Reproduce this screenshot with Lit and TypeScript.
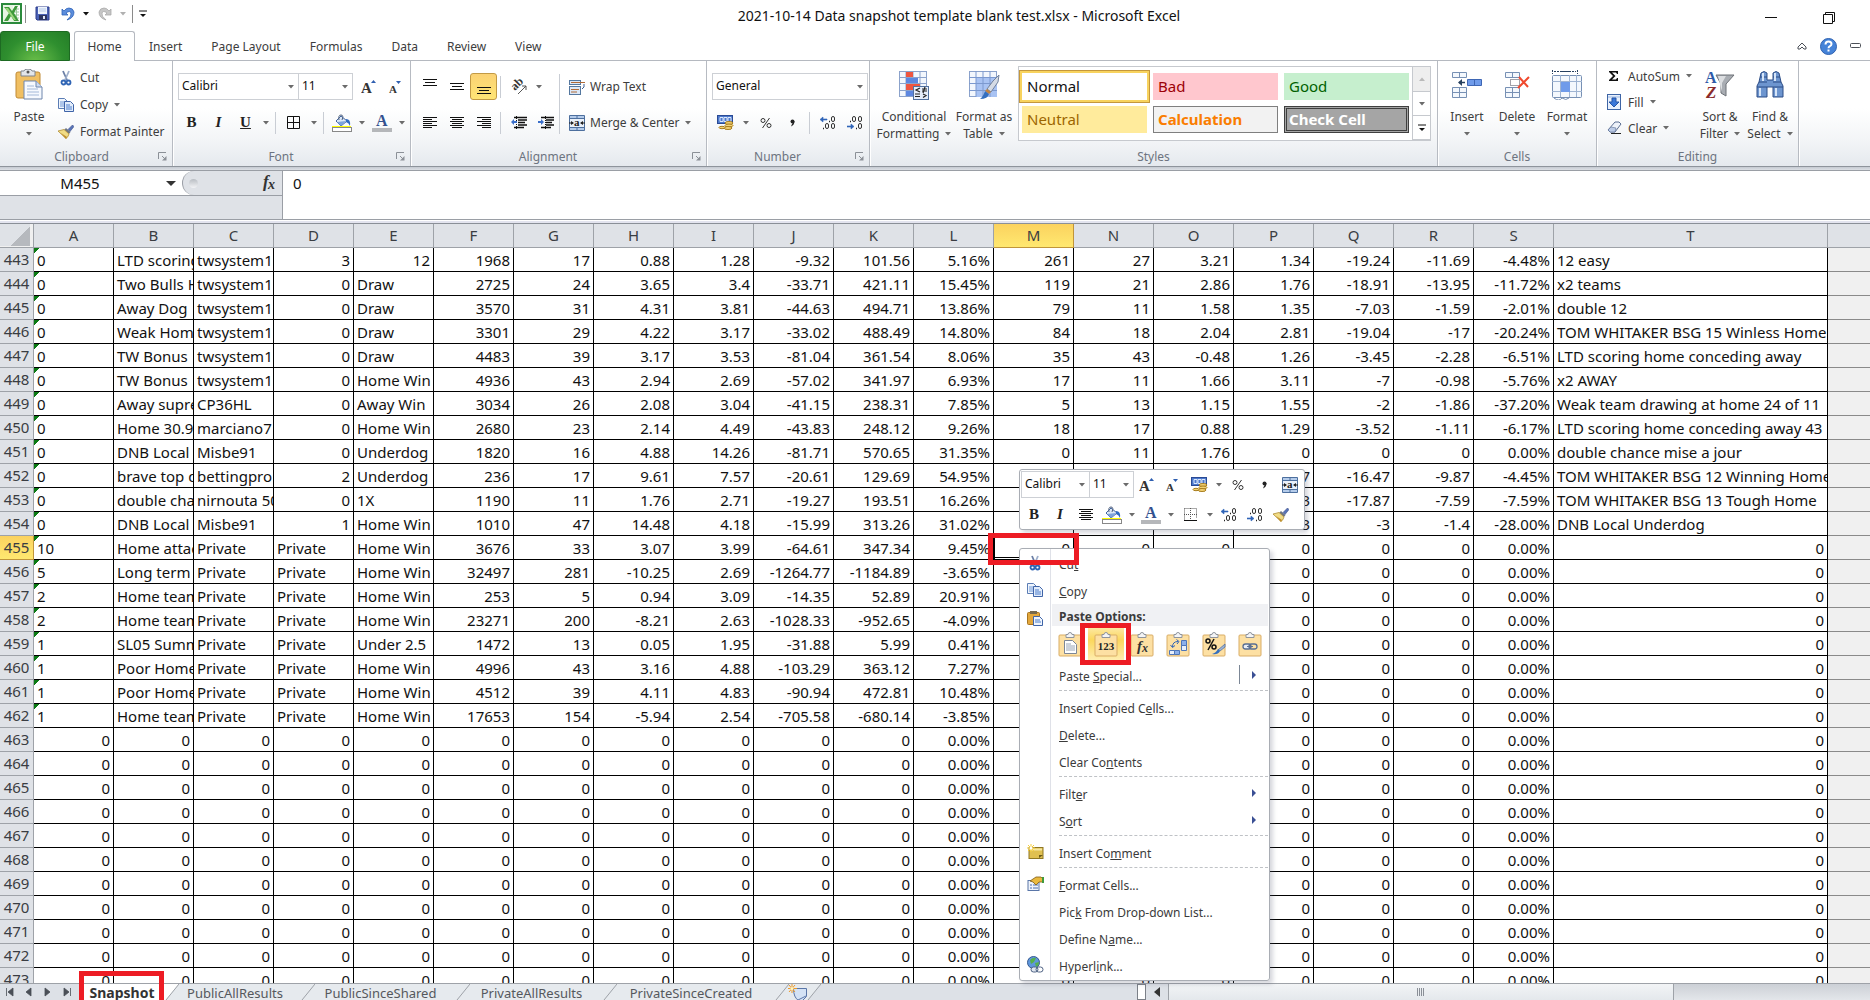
import { LitElement, html, css, nothing, TemplateResult } from "lit";
import { customElement } from "lit/decorators.js";
import { classMap } from "lit/directives/class-map.js";

/* ---------- icons ---------- */

const icons: Record<string, TemplateResult> = {
  excel: html`<svg width="21" height="21" viewBox="0 0 21 21"><rect x="1" y="1" width="19" height="19" fill="#e9f5e4" stroke="#2b8a3c" stroke-width="2"/><rect x="12" y="3" width="7" height="15" fill="#fff"/><path d="M13 6h5M13 9h5M13 12h5M13 15h5M15.500 4v13" stroke="#9bc99b"/><path d="M3 4h5l3 4 3-5h3l-4 7 5 8h-5l-3-5-3 5H3l5-8z" fill="#3f9a3b"/><path d="M4 5h3l8 12h-2z" fill="#9bd67c"/></svg>`,
  save: html`<svg width="15" height="15" viewBox="0 0 15 15"><path d="M1 1h13v13H2L1 13z" fill="#4a62b5" stroke="#2c3c8c"/><rect x="3" y="1" width="9" height="7" fill="#eef4fc"/><rect x="4" y="9" width="8" height="5" fill="#2a3360"/><rect x="8" y="10" width="2" height="3" fill="#dfe6f5"/><path d="M4 3h7M4 5h7" stroke="#b5c8e8"/></svg>`,
  undo: html`<svg width="14" height="14" viewBox="0 0 14 14"><path d="M1 2v6h6L5 6q4-3 5 0 1 3-4 7 7-2 7-8-1-4-5-4-3 0-5 3z" fill="#5b8ddc" stroke="#2e62b8" stroke-width=".8"/></svg>`,
  redo: html`<svg width="14" height="14" viewBox="0 0 14 14"><path d="M13 2v6H7l2-2Q5 3 4 6q-1 3 4 7-7-2-7-8 1-4 5-4 3 0 5 3z" fill="#c6c6c6" stroke="#aaa" stroke-width=".8"/></svg>`,
  qat: html`<svg width="8" height="8" viewBox="0 0 8 8"><path d="M0 1h8" stroke="#111" stroke-width="1"/><path d="M1 4h6L4 7z" fill="#111"/></svg>`,
  arrow: html`<svg width="6" height="4" viewBox="0 0 6 4"><path d="M0 0h6L3 3.500z" fill="#6b6b6b"/></svg>`,
  darrow: html`<svg width="6" height="4" viewBox="0 0 6 4"><path d="M0 0h6L3 3.500z" fill="#111"/></svg>`,
  garrow: html`<svg width="6" height="4" viewBox="0 0 6 4"><path d="M0 0h6L3 3.500z" fill="#b0b0b0"/></svg>`,
  paste: html`<svg width="28" height="31" viewBox="0 0 28 31"><rect x="1" y="3" width="24" height="26" rx="2" fill="#f0bf62" stroke="#c08a34"/><path d="M6 2h3q0-2 4-2t4 2h3v5H6z" fill="#e3e6ea" stroke="#7e858e"/><circle cx="13" cy="3" r="1.500" fill="#555"/><path d="M9 12h12l6 6v12H9z" fill="#f6f9fe" stroke="#6e86ad"/><path d="M21 12v6h6" fill="#cfdcf0" stroke="#6e86ad"/><path d="M12 17h7M12 20h11M12 23h12M12 26h12" stroke="#a3b8d8"/></svg>`,
  cut: html`<svg width="16" height="16" viewBox="0 0 16 16"><path d="M5 1l4 9" stroke="#6b7fa6" stroke-width="1.800" fill="none"/><path d="M11 1L7 10" stroke="#9fb0cc" stroke-width="1.800" fill="none"/><circle cx="5.500" cy="12.500" r="2" fill="none" stroke="#2f64b4" stroke-width="1.800"/><circle cx="10.500" cy="12.500" r="2" fill="none" stroke="#2f64b4" stroke-width="1.800"/></svg>`,
  copy: html`<svg width="16" height="16" viewBox="0 0 16 16"><path d="M.5 1.500h6l3 3v7h-9z" fill="#eff5fd" stroke="#5b7db5"/><path d="M2 5h5M2 7h6M2 9h6" stroke="#6f97d6"/><path d="M6.500 4.500h6l3 3v7h-9z" fill="#e3edfb" stroke="#3f64a8"/><path d="M8 8h4M8 10h6M8 12h6" stroke="#4b7ccc"/></svg>`,
  painter: html`<svg width="16" height="16" viewBox="0 0 16 16"><path d="M14.500 1L16 2.500l-4 5-2-2z" fill="#5874b8" stroke="#3c4f86" stroke-width=".6"/><path d="M8 4l4.500 4-1.500 2-5-4z" fill="#6f7684"/><path d="M6 5.500L0 7l8 7.500q2-1 3-4.500z" fill="#f1dc86" stroke="#b08d33" stroke-width=".8"/><path d="M3 9l6 4-1 2z" fill="#bf8e2b"/></svg>`,
  launcher: html`<svg width="9" height="9" viewBox="0 0 9 9"><path d="M.5 7V.5H8" fill="none" stroke="#8b9097"/><path d="M8.500 4v4.500H4z" fill="#8b9097"/><path d="M4 4l3 3" stroke="#8b9097"/></svg>`,
  grow: html`<svg width="16" height="16" viewBox="0 0 16 16"><text x="0" y="14" font-family="Liberation Serif, serif" font-weight="700" font-size="15" fill="#333">A</text><path d="M10 4h5l-2.500-3z" fill="#2f5fb0"/></svg>`,
  shrink: html`<svg width="16" height="16" viewBox="0 0 16 16"><text x="1" y="14" font-family="Liberation Serif, serif" font-weight="700" font-size="11" fill="#333">A</text><path d="M8 2h5l-2.500 3z" fill="#2f5fb0"/></svg>`,
  borders: html`<svg width="13" height="13" viewBox="0 0 13 13"><path d="M.5.5h12v12H.5zM6.500 0v13M0 6.500h13" fill="none" stroke="#111"/></svg>`,
  dotborders: html`<svg width="13" height="13" viewBox="0 0 13 13"><path d="M.5.5h12v10M.5.5v11M6.500 0v12M0 6.500h13" fill="none" stroke="#555" stroke-dasharray="1 1"/><path d="M0 12.500h13" stroke="#111"/></svg>`,
  fill: html`<svg width="20" height="18" viewBox="0 0 20 18"><path d="M9 2l6 5-6 5-5-5z" fill="#dbe7f7" stroke="#41649e"/><path d="M7 6q-1-5 2-5t1 5" fill="none" stroke="#51627f"/><path d="M14 5q5 0 4 7-1-3-4-4z" fill="#2f6ac2"/><path d="M5 8l9-1-5 5z" fill="#7da4de"/><rect x="0" y="12" width="19" height="1" fill="#ff0"/><rect x=".5" y="13.500" width="19" height="4" fill="#fff" stroke="#888"/></svg>`,
  fontcolor: html`<svg width="20" height="18" viewBox="0 0 20 18"><text x="4" y="12" font-family="Liberation Serif, serif" font-weight="700" font-size="16" fill="#33518f">A</text><rect x="0" y="14" width="20" height="4" fill="#b5b7ba"/></svg>`,
  top: html`<svg width="14" height="16" viewBox="0 0 14 16"><path d="M0 .5h14M2 3.500h10M0 6.500h14" stroke="#111"/></svg>`,
  middle: html`<svg width="14" height="8" viewBox="0 0 14 8"><path d="M0 .5h14M2 3.500h10M0 6.500h14" stroke="#111"/></svg>`,
  bottom: html`<svg width="14" height="14" viewBox="0 0 14 14"><path d="M0 7.500h14M2 10.500h10M0 13.500h14" stroke="#111"/></svg>`,
  left: html`<svg width="14" height="11" viewBox="0 0 14 11"><path d="M0 .5h14M0 2.500h9M0 4.500h14M0 6.500h9M0 8.500h14M0 10.500h9" stroke="#111"/></svg>`,
  center: html`<svg width="14" height="11" viewBox="0 0 14 11"><path d="M0 .5h14M2 2.500h10M0 4.500h14M2 6.500h10M0 8.500h14M2 10.500h10" stroke="#111"/></svg>`,
  right: html`<svg width="14" height="11" viewBox="0 0 14 11"><path d="M0 .5h14M5 2.500h9M0 4.500h14M5 6.500h9M0 8.500h14M5 10.500h9" stroke="#111"/></svg>`,
  orient: html`<svg width="18" height="16" viewBox="0 0 18 16"><text x="0" y="0" transform="translate(5 12) rotate(-45)" font-family="Liberation Serif, serif" font-weight="700" font-size="12" fill="#333">ab</text><path d="M8 15l8-8M12 7h4v4" fill="none" stroke="#555"/></svg>`,
  outdent: html`<svg width="16" height="13" viewBox="0 0 16 13"><path d="M3 1.500h13M7 4h9M7 6.500h7M7 9h9M3 11.500h10" stroke="#111" stroke-width="1.500"/><path d="M5.500 0v13" stroke="#111" stroke-dasharray="1 1"/><path d="M0 6l3-3v2h3v2H3v2z" fill="#3b6fca"/></svg>`,
  indent: html`<svg width="16" height="13" viewBox="0 0 16 13"><path d="M3 1.500h13M8 4h8M8 6.500h6M8 9h8M3 11.500h10" stroke="#111" stroke-width="1.500"/><path d="M7.500 0v13" stroke="#111" stroke-dasharray="1 1"/><path d="M6 6L3 3v2H0v2h3v2z" fill="#3b6fca"/></svg>`,
  wrap: html`<svg width="16" height="16" viewBox="0 0 16 16"><rect x=".5" y="1.500" width="11" height="4" fill="#dce8f7" stroke="#54779f"/><path d="M2 3.500h14" stroke="#b06a37"/><rect x=".5" y="7.500" width="11" height="8" fill="#dce8f7" stroke="#54779f"/><path d="M2 10.500h8M2 13h6" stroke="#b06a37"/><path d="M15 5v3l-2 2" fill="none" stroke="#3b5f94"/></svg>`,
  merge: html`<svg width="16" height="16" viewBox="0 0 16 16"><path d="M.5.5h15v15H.5zM0 3.500h16M0 12.500h16M8 0v3M8 13v3" fill="#b4cbea" stroke="#4d6f9e"/><rect x="1" y="4" width="14" height="8" fill="#e9f0fa"/><text x="5" y="11" font-family="Liberation Serif, serif" font-weight="700" font-size="11" fill="#222">a</text><path d="M0 8h4M12 8h4" stroke="#222"/><path d="M5 8L2 6v4zM11 8l3-2v4z" fill="#222"/></svg>`,
  currency: html`<svg width="17" height="17" viewBox="0 0 17 17"><rect x=".5" y="1.500" width="15" height="8" fill="#4c78cc" stroke="#2a4a94"/><path d="M3 3.500h3v4H3zM7 3.500h3v4H7zM11 3.500h3v4h-3z" fill="none" stroke="#dce8fb"/><ellipse cx="12" cy="9" rx="4" ry="1.500" fill="#f3d275" stroke="#a87d1d"/><ellipse cx="12" cy="11.500" rx="4" ry="1.500" fill="#f3d275" stroke="#a87d1d"/><ellipse cx="11" cy="14" rx="4" ry="1.500" fill="#f3d275" stroke="#a87d1d"/><ellipse cx="5" cy="13.500" rx="3" ry="1.200" fill="#f3d275" stroke="#a87d1d"/></svg>`,
  percent: html`<svg width="12" height="12" viewBox="0 0 12 12"><circle cx="3" cy="3.500" r="2" fill="none" stroke="#333"/><circle cx="9" cy="8.500" r="2" fill="none" stroke="#333"/><path d="M9.500 1l-7 10" stroke="#333"/></svg>`,
  comma: html`<svg width="5" height="8" viewBox="0 0 5 8"><circle cx="2.500" cy="2.500" r="2" fill="#222"/><path d="M4.500 2q0 4-3.500 5.500L2 5z" fill="#222"/></svg>`,
  incdec: html`<svg width="16" height="14" viewBox="0 0 16 14"><path d="M0 3.500L3 1v2h4v1H3v2z" fill="#2f64b8" stroke="#2f64b8" stroke-width=".6"/><path d="M9 5.500h1M3 12.500h1" stroke="#222" stroke-width="1.500"/><rect x="11.500" y=".5" width="3" height="5" rx="1.500" fill="none" stroke="#333"/><rect x="5.500" y="7.500" width="3" height="5" rx="1.500" fill="none" stroke="#333"/><rect x="11.500" y="7.500" width="3" height="5" rx="1.500" fill="none" stroke="#333"/></svg>`,
  decdec: html`<svg width="16" height="14" viewBox="0 0 16 14"><path d="M7 10.500L4 8v2H0v1h4v2z" fill="#2f64b8" stroke="#2f64b8" stroke-width=".6"/><path d="M3 5.500h1M9 12.500h1" stroke="#222" stroke-width="1.500"/><rect x="5.500" y=".5" width="3" height="5" rx="1.500" fill="none" stroke="#333"/><rect x="11.500" y=".5" width="3" height="5" rx="1.500" fill="none" stroke="#333"/><rect x="11.500" y="7.500" width="3" height="5" rx="1.500" fill="none" stroke="#333"/></svg>`,
  conditional: html`<svg width="32" height="31" viewBox="0 0 32 31"><rect x="1.500" y="2.500" width="27" height="25" fill="#f3f7fd" stroke="#8ba2cb"/><path d="M8 2v26M15 2v26M22 2v26M1 8.500h28M1 14.500h28M1 21.500h28" stroke="#8ba2cb"/><path d="M8 3h7v5H8zM8 15h14v6H8z" fill="#ee5540"/><path d="M8 9h12v5H8zM8 22h7v5H8z" fill="#5c86e0"/><rect x="15.500" y="17.500" width="15" height="13" fill="#e6eefb" stroke="#51719f"/><path d="M22 19l-4 2 4 2M17 25h5M17 27.500h5M24 20h5M24 22h5M27 18l-2 6M25 25l3 1.500-3 2" fill="none" stroke="#222" stroke-width="1.200"/></svg>`,
  tablefmt: html`<svg width="32" height="31" viewBox="0 0 32 31"><rect x="1.500" y="2.500" width="27" height="25" fill="#f3f7fd" stroke="#8ba2cb"/><path d="M8 9h21v19H8z" fill="#a9c3f3"/><path d="M8 2v26M15 2v26M22 2v26M1 8.500h28M1 14.500h28M1 21.500h28" stroke="#7c99cf"/><path d="M31 6l-1 7-7 10-4-3 6-8z" fill="#d5dbe5" stroke="#71819c"/><path d="M19 20l4 3-2 2-4-3z" fill="#c28342"/><path d="M17 22l4 3q-1 5-9 5 3-2 5-8z" fill="#356fbe"/></svg>`,
  insert: html`<svg width="32" height="31" viewBox="0 0 32 31"><path d="M1.500 3.500h14v5h-14zM8.500 3v6M1.500 18.500h14v10h-14zM8.500 18v10M1 23.500h15" fill="#f4f8fd" stroke="#7790b4"/><path d="M16.500 10.500h14v6h-14zM23.500 10v7" fill="#6f9bea" stroke="#3e66b4"/><path d="M14 13.500H8" stroke="#27405f" stroke-width="1.500"/><path d="M11 10l-4 3.500 4 3.500z" fill="#27405f"/></svg>`,
  delete: html`<svg width="32" height="31" viewBox="0 0 32 31"><path d="M4.500 3.500h14v5h-14zM11.500 3v6M4.500 18.500h14v10h-14zM11.500 18v10M4 23.500h15" fill="#f4f8fd" stroke="#7790b4"/><path d="M9.500 10.500h9v6h-9z" fill="none" stroke="#445" stroke-dasharray="1 1"/><path d="M18 8l9 10M28 8L17 19" stroke="#f0492d" stroke-width="2"/></svg>`,
  format: html`<svg width="32" height="31" viewBox="0 0 32 31"><path d="M1.500 1v4M26.500 1v4M3 2.500h22" stroke="#27405f" stroke-dasharray="2 1"/><path d="M9 2.500h10" stroke="#27405f"/><rect x="1.500" y="6.500" width="29" height="22" rx="1" fill="#f4f8fd" stroke="#7790b4"/><path d="M9.500 6v22M18.500 6v22M25.500 6v22M1 12.500h30M1 22.500h30" stroke="#9fb4d2"/><rect x="10" y="13" width="9" height="10" fill="#6f9bea"/><path d="M3 29q5 4 8 0 4 3 7 0" fill="#fff" stroke="#7790b4"/></svg>`,
  sigma: html`<svg width="14" height="16" viewBox="0 0 14 16"><path d="M2 3h9v3h-1l-1-1.500H5l3.500 3.500L5 11.500h4l1-1.500h1v3H2v-1l4-4-4-4z" fill="#111"/></svg>`,
  filldown: html`<svg width="14" height="16" viewBox="0 0 14 16"><rect x=".5" y=".5" width="13" height="15" fill="#e8f0fc" stroke="#3e65a5"/><path d="M1 3h12" stroke="#9db8e2"/><path d="M5 4h4v4h3l-5 5-5-5h3z" fill="#3a77d8" stroke="#2454a5"/></svg>`,
  clear: html`<svg width="15" height="14" viewBox="0 0 15 14"><path d="M1 9l7-8h4l2 2-6 8H3z" fill="#eef2f9" stroke="#5b6f93"/><path d="M1 9l3-3 5 1-1 4H3z" fill="#bccbe6" stroke="#5b6f93" stroke-width=".6"/><path d="M4 12.500h10" stroke="#222"/></svg>`,
  sort: html`<svg width="32" height="31" viewBox="0 0 32 31"><text x="1" y="14" font-family="Liberation Serif, serif" font-weight="700" font-size="16" fill="#2d5aa8">A</text><text x="2" y="29" font-family="Liberation Serif, serif" font-weight="700" font-size="17" font-style="italic" fill="#8a2b2b">Z</text><path d="M12 6h18l-8 9v12l-5-3v-9z" fill="#a9adb3" stroke="#6d7177"/><path d="M14 7h8l-4 7v9z" fill="#dcdee1"/></svg>`,
  find: html`<svg width="30" height="31" viewBox="0 0 30 31"><path d="M6 4q3-3 6 0v7h6V4q3-3 6 0l2 9 2 4v11H18V18h-6v10H2V17l2-4z" fill="#6d95cf" stroke="#2c4c86"/><path d="M5 8h7M18 8h7M4 13h8M18 13h8M2 18h10M18 18h10" stroke="#2c4c86"/><path d="M5 19v8M21 19v8M8 4v8M20 4v8" stroke="#d6e5f8" stroke-width="2"/></svg>`,
  help: html`<svg width="17" height="17" viewBox="0 0 17 17"><circle cx="8.500" cy="8.500" r="8" fill="#4583d8" stroke="#2f62b0"/><path d="M5.500 6.500q0-3 3-3t3 2.500q0 1.500-1.500 2.200-1.500.8-1.500 2" fill="none" stroke="#fff" stroke-width="2"/><rect x="7.500" y="11.500" width="2" height="2" fill="#fff"/></svg>`,
  fx: html`<svg width="16" height="18" viewBox="0 0 16 18"><text x="2" y="13" font-family="Liberation Serif, serif" font-style="italic" font-weight="700" font-size="17" fill="#333">f</text><text x="7" y="15" font-family="Liberation Serif, serif" font-style="italic" font-weight="700" font-size="14" fill="#333">x</text></svg>`,
  pasteSmall: html`<svg width="16" height="16" viewBox="0 0 16 16"><rect x=".5" y="2.500" width="12" height="12" rx="1" fill="#e3a73b" stroke="#a87520"/><path d="M3 1h7v3H3z" fill="#77694c"/><path d="M6.500 6.500h6l3 3v6h-9z" fill="#eff5fd" stroke="#3f64a8"/><path d="M8 10h5M8 12h6" stroke="#4b7ccc"/></svg>`,
  comment: html`<svg width="17" height="15" viewBox="0 0 17 15"><rect x="2" y="3.500" width="14" height="11" fill="#e0c050" stroke="#8f7722"/><path d="M3 5.500h12" stroke="#f6e7a1" stroke-width="2"/><path d="M12 14v-3h4" fill="#6b5a18"/><path d="M4 0v8M0 4h8M1 1l6 6M7 1L1 7" stroke="#f7cf3a"/><circle cx="4" cy="4" r="1.500" fill="#fff"/></svg>`,
  formatCells: html`<svg width="17" height="16" viewBox="0 0 17 16"><rect x="1" y="4.500" width="11" height="10" fill="#eef3fb" stroke="#5a76a8"/><path d="M3 9h2M3 12h2M6 9h5M6 12h5" stroke="#4a6fb0"/><path d="M3 5l6-4h5l2 2v3h-4l-3 3-3-3z" fill="#e9b93e" stroke="#7d5b14" stroke-width=".8"/><path d="M16 1v6" stroke="#3f9a3b" stroke-width="2"/></svg>`,
  link: html`<svg width="17" height="17" viewBox="0 0 17 17"><circle cx="6.500" cy="6.500" r="6" fill="#5f97dc" stroke="#35598f"/><path d="M3 4q3-3 6-2l-2 4-3 2zM8 7l4-1q0 4-3 5z" fill="#55b04c"/><rect x="4" y="11" width="7" height="5" rx="2.500" fill="#dfe6f0" stroke="#4f6384"/><rect x="9" y="11" width="7" height="5" rx="2.500" fill="none" stroke="#4f6384"/></svg>`,
  newsheet: html`<svg width="20" height="17" viewBox="0 0 20 17"><path d="M5.500 4.500h13v8l-4 4h-4q-5-3-5-12z" fill="#d4e2f5" stroke="#5a76a8"/><path d="M10 16l8-4" stroke="#5a76a8"/><path d="M4 0v9M0 4.500h9M1 1l6 7M7 1L1 8" stroke="#ef9b28"/><circle cx="4" cy="4.500" r="1.500" fill="#fff6c0"/></svg>`,
};

/* Clipboard tile that carries each paste-option picture */
const clipTile = (inner: TemplateResult) => html`<svg width="24" height="26" viewBox="0 0 24 26">
  <rect x="1" y="4" width="22" height="21" rx="1" fill="#fde0a3" stroke="#d9ad66"/>
  <path d="M8 6.500v-3h2q0-2 2-2t2 2h2v3z" fill="#f3f4f6" stroke="#8f949c"/>
</svg>${inner}`;

const pasteOptions: { name: string; art: TemplateResult; on?: boolean }[] = [
  { name: "Paste", art: html`<svg class="over" width="24" height="26" viewBox="0 0 24 26"><path d="M6.500 9.500h8l4 4v9h-12z" fill="#fff" stroke="#7c8696"/><path d="M8 13h5M8 15h9M8 17h9M8 19h9" stroke="#9aa5b6"/></svg>` },
  { name: "Values", on: true, art: html`<svg class="over" width="24" height="26" viewBox="0 0 24 26"><text x="12" y="19" text-anchor="middle" font-family="Liberation Serif, serif" font-weight="700" font-size="11" fill="#222">123</text></svg>` },
  { name: "Formulas", art: html`<svg class="over" width="24" height="26" viewBox="0 0 24 26"><text x="7" y="20" font-family="Liberation Serif, serif" font-style="italic" font-weight="700" font-size="15" fill="#333">f</text><text x="12" y="21" font-family="Liberation Serif, serif" font-style="italic" font-weight="700" font-size="12" fill="#333">x</text></svg>` },
  { name: "Transpose", art: html`<svg class="over" width="24" height="26" viewBox="0 0 24 26"><path d="M15.500 9.500h5v5h-5zM15.500 14.500h5v5h-5zM3.500 19.500h5v4h-5zM8.500 19.500h5v4h-5z" fill="#e9f0fb" stroke="#4f76b8"/><path d="M16 10h4v4h-4zM9 20h4v3H9z" fill="#8db0ea"/><path d="M6.500 16q0-5.500 5.500-5.500M4.500 14l2 2.500 2.500-2M10.500 8.500l2.500 2-2 2.500" fill="none" stroke="#2f64b8"/></svg>` },
  { name: "Formatting", art: html`<svg class="over" width="24" height="26" viewBox="0 0 24 26"><circle cx="6" cy="10" r="2" fill="none" stroke="#111" stroke-width="1.500"/><circle cx="12" cy="16" r="2" fill="none" stroke="#111" stroke-width="1.500"/><path d="M12 8L6 19" stroke="#111" stroke-width="1.500"/><path d="M23 13v3l-5 4-2-1z" fill="#9db4d8" stroke="#54719f" stroke-width=".8"/><path d="M16 18l2 2q-2 4-8 3 4-1 6-5z" fill="#356fbe"/></svg>` },
  { name: "Paste Link", art: html`<svg class="over" width="24" height="26" viewBox="0 0 24 26"><rect x="5" y="13" width="8" height="5" rx="2.500" fill="#e8edf5" stroke="#5a6f93" stroke-width="1.300"/><rect x="11" y="13" width="8" height="5" rx="2.500" fill="none" stroke="#5a6f93" stroke-width="1.300"/><path d="M9 15.500h6" stroke="#5a6f93"/></svg>` },
];

/* ---------- sheet data ---------- */

const columns = "ABCDEFGHIJKLMNOPQRST".split("");

const source = `443|0|LTD scoring|twsystem1|3|12|1968|17|0.88|1.28|-9.32|101.56|5.16%|261|27|3.21|1.34|-19.24|-11.69|-4.48%|12 easy
444|0|Two Bulls H|twsystem1|0|Draw|2725|24|3.65|3.4|-33.71|421.11|15.45%|119|21|2.86|1.76|-18.91|-13.95|-11.72%|x2 teams
445|0|Away Dog|twsystem1|0|Draw|3570|31|4.31|3.81|-44.63|494.71|13.86%|79|11|1.58|1.35|-7.03|-1.59|-2.01%|double 12
446|0|Weak Home|twsystem1|0|Draw|3301|29|4.22|3.17|-33.02|488.49|14.80%|84|18|2.04|2.81|-19.04|-17|-20.24%|TOM WHITAKER BSG 15 Winless Home
447|0|TW Bonus|twsystem1|0|Draw|4483|39|3.17|3.53|-81.04|361.54|8.06%|35|43|-0.48|1.26|-3.45|-2.28|-6.51%|LTD scoring home conceding away
448|0|TW Bonus|twsystem1|0|Home Win|4936|43|2.94|2.69|-57.02|341.97|6.93%|17|11|1.66|3.11|-7|-0.98|-5.76%|x2 AWAY
449|0|Away supre|CP36HL|0|Away Win|3034|26|2.08|3.04|-41.15|238.31|7.85%|5|13|1.15|1.55|-2|-1.86|-37.20%|Weak team drawing at home 24 of 11
450|0|Home 30.9|marciano7|0|Home Win|2680|23|2.14|4.49|-43.83|248.12|9.26%|18|17|0.88|1.29|-3.52|-1.11|-6.17%|LTD scoring home conceding away 43
451|0|DNB Local|Misbe91|0|Underdog|1820|16|4.88|14.26|-81.71|570.65|31.35%|0|11|1.76|0|0|0|0.00%|double chance mise a jour
452|0|brave top d|bettingpro|2|Underdog|236|17|9.61|7.57|-20.61|129.69|54.95%||||7|-16.47|-9.87|-4.45%|TOM WHITAKER BSG 12 Winning Home
453|0|double chan|nirnouta 50|0|1X|1190|11|1.76|2.71|-19.27|193.51|16.26%||||3|-17.87|-7.59|-7.59%|TOM WHITAKER BSG 13 Tough Home
454|0|DNB Local|Misbe91|1|Home Win|1010|47|14.48|4.18|-15.99|313.26|31.02%||||3|-3|-1.4|-28.00%|DNB Local Underdog
455|10|Home attac|Private|Private|Home Win|3676|33|3.07|3.99|-64.61|347.34|9.45%
456|5|Long term|Private|Private|Home Win|32497|281|-10.25|2.69|-1264.77|-1184.89|-3.65%
457|2|Home team|Private|Private|Home Win|253|5|0.94|3.09|-14.35|52.89|20.91%
458|2|Home team|Private|Private|Home Win|23271|200|-8.21|2.63|-1028.33|-952.65|-4.09%
459|1|SL05 Summ|Private|Private|Under 2.5|1472|13|0.05|1.95|-31.88|5.99|0.41%
460|1|Poor Home|Private|Private|Home Win|4996|43|3.16|4.88|-103.29|363.12|7.27%
461|1|Poor Home|Private|Private|Home Win|4512|39|4.11|4.83|-90.94|472.81|10.48%
462|1|Home team|Private|Private|Home Win|17653|154|-5.94|2.54|-705.58|-680.14|-3.85%`;

const blankTail = ["0", "0", "0", "0", "0", "0", "0.00%", "0"];

const rows: string[][] = source.split("\n").map((line) => {
  const cells = line.split("|");
  return cells.length < 21 ? [...cells, ...blankTail] : cells;
});
for (let n = 463; n <= 473; n++) {
  rows.push([String(n), ...Array(11).fill("0"), "0.00%", ...blankTail]);
}

const isNumeric = (v: string) => /^-?[\d.]+%?$/.test(v);

interface MenuItem {
  text?: string;
  key?: string;
  rest?: string;
  icon?: string;
  more?: boolean;
  split?: boolean;
  sep?: boolean;
}

const menuAfterPaste: MenuItem[] = [
  { text: "Paste ", key: "S", rest: "pecial...", more: true, split: true },
  { sep: true },
  { text: "Insert Copied C", key: "e", rest: "lls..." },
  { text: "", key: "D", rest: "elete..." },
  { text: "Clear Co", key: "n", rest: "tents" },
  { sep: true },
  { text: "Filt", key: "e", rest: "r", more: true },
  { text: "S", key: "o", rest: "rt", more: true },
  { sep: true },
  { text: "Insert Co", key: "m", rest: "ment", icon: "comment" },
  { sep: true },
  { text: "", key: "F", rest: "ormat Cells...", icon: "formatCells" },
  { text: "Pic", key: "k", rest: " From Drop-down List..." },
  { text: "Define N", key: "a", rest: "me..." },
  { text: "Hyperl", key: "i", rest: "nk...", icon: "link" },
];

const baseStyles = css`
  :host { box-sizing: border-box; }
  * { box-sizing: border-box; }
  button, select, input {
    font: inherit; color: inherit; margin: 0; padding: 0; border: 0; background: none; border-radius: 0; outline: none;
  }
  button { display: flex; align-items: center; justify-content: center; white-space: nowrap; }
  svg { display: block; flex: none; }
  .tool { width: 27px; height: 27px; flex: none; }
  .drop { width: 13px; height: 27px; flex: none; }
  .tool.on { background: linear-gradient(#fbd274, #ffe575); border: 1px solid #c29a45; border-radius: 3px; }
  .serif { font-family: "Liberation Serif", serif; font-weight: 700; font-size: 15px; color: #222; }
  .bold { font-weight: 900; }
  .italic { font-style: italic; }
  .under { text-decoration: underline; }
  .rule { width: 1px; height: 22px; margin: 0 4px 0 3px; background: #c9cdd4; flex: none; }
  .combo { position: relative; display: flex; align-items: center; border: 1px solid #cdd0d5; background: #fff; height: 27px; flex: none; color: #111; }
  .combo select { appearance: none; width: 100%; height: 100%; padding: 0 14px 2px 3px; }
  .combo svg { position: absolute; right: 4px; pointer-events: none; }
`;

const combo = (label: string, value: string, cls: string) => html`
  <label class="combo ${cls}"><select aria-label=${label}><option>${value}</option></select>${icons.arrow}</label>`;
const tool = (name: string, label: string, on = false) => html`
  <button class=${classMap({ tool: true, on })} aria-label=${label}>${icons[name]}</button>`;
const drop = (label: string) => html`<button class="drop" aria-label=${label}>${icons.arrow}</button>`;

/* ---------- ribbon ---------- */

@customElement("ribbon-bar")
class RibbonBar extends LitElement {
  static styles = [baseStyles, css`
    :host { display: flex; height: 107px; flex: none; border-top: 1px solid #b5b9c0; border-bottom: 1px solid #8e949c;
      background: linear-gradient(#fff 0, #fff 45%, #f3f5f7 75%, #e5e9ee 100%); color: #3d3d3d; margin-top: -1px; }
    .group { display: flex; flex-direction: column; border-right: 1px solid #b7bbc2; box-shadow: 1px 0 #fff; flex: none; }
    .body { flex: 1; display: flex; }
    .foot { height: 21px; display: flex; align-items: center; color: #6d7480; padding: 1px 5px 0; }
    .foot span { flex: 1; text-align: center; }
    .font .foot span, .align .foot span, .number .foot span { padding-right: 12px; }
    .clipboard { width: 173px; }
    .font { width: 238px; }
    .align { width: 296px; }
    .number { width: 163px; }
    .styles { width: 568px; }
    .cells { width: 159px; }
    .edit { width: 202px; }
    .rows { display: flex; flex-direction: column; gap: 9px; padding: 12px 0 0 5px; }
    .row { display: flex; align-items: center; height: 27px; }
    .vrule { width: 1px; background: #c9cdd4; height: 60px; margin-top: 13px; }
    .list { display: flex; flex-direction: column; padding-top: 3px; align-items: flex-start; }
    .list button { height: 27px; gap: 6px; }
    .edit .list { padding: 2px 0 0 9px; width: 90px; }
    .edit .list button { height: 26px; gap: 6px; }
    .slot { width: 16px; display: flex; justify-content: center; }
    .big { flex-direction: column; justify-content: flex-start; height: 84px; padding-top: 8px; gap: 8px; }
    .big .cap { line-height: 17px; text-align: center; display: flex; flex-direction: column; align-items: center; }
    .big .last { display: flex; align-items: center; gap: 6px; min-height: 17px; }
    .clipboard .big { width: 58px; }
    .styles .body { padding-left: 8px; }
    .styles .big { width: 72px; }
    .styles .big + .big { width: 68px; }
    .cells .body { padding-left: 4px; }
    .cells .big { width: 50px; }
    .edit .big { width: 50px; }
    .edit .list + .big { margin-left: 8px; }
    .f-name { width: 121px; }
    .f-size { width: 55px; margin-left: -1px; }
    .f-fmt { width: 156px; }
    .grow { margin-left: 2px; }
    .labels button { height: 27px; gap: 5px; }
    .labels { padding-left: 9px; align-items: flex-start; }
    .gallery { display: flex; height: 75px; margin-top: 5px; border: 1px solid #c6c9ce; background: #fff; }
    .swatches { display: grid; grid-template-columns: repeat(3, 125px); grid-template-rows: 27px 27px; gap: 6px; padding: 6px 3px 0 3px; font-size: 15px; }
    .swatches button { justify-content: flex-start; padding: 0 5px 1px; }
    .normal { outline: 2px solid #f8d35e; box-shadow: 0 0 0 3px #c4973d; color: #111; }
    .bad { background: #ffc7ce; color: #9c0006; }
    .good { background: #c6efce; color: #006100; }
    .neutral { background: #ffeb9c; color: #9c6500; }
    .swatches .calc { background: #f2f2f2; color: #fa7d00; border: 1px solid #7f7f7f; font-weight: 700; padding: 0 4px 1px; }
    .swatches .check { background: #a5a5a5; color: #fff; border: 3px double #3f3f3f; font-weight: 700; padding: 0 2px 1px; }
    .scroll { display: grid; grid-template-rows: 25px 24px 24px; width: 18px; }
    .scroll button { border-left: 1px solid #c6c9ce; border-bottom: 1px solid #c6c9ce; }
    .scroll button:first-child { background: #eee; }
    .flip { transform: rotate(180deg); opacity: .4; }
  `];

  private foot(name: string, launcher = true) {
    return html`<div class="foot"><span>${name}</span>${launcher
      ? html`<button aria-label="${name} settings">${icons.launcher}</button>` : nothing}</div>`;
  }

  private big(icon: string, line1: string, line2 = "") {
    return html`<button class="big">${icons[icon]}<span class="cap"><span>${line1}</span><span class="last">${line2}${icons.arrow}</span></span></button>`;
  }

  private item(icon: string, label: string, more = false) {
    return html`<button><span class="slot">${icons[icon]}</span>${label}${more ? icons.arrow : nothing}</button>`;
  }

  render() {
    return html`
      <section class="group clipboard">
        <div class="body">
          ${this.big("paste", "Paste")}
          <div class="list">${this.item("cut", "Cut")}${this.item("copy", "Copy", true)}${this.item("painter", "Format Painter")}</div>
        </div>${this.foot("Clipboard")}
      </section>
      <section class="group font">
        <div class="body"><div class="rows">
          <div class="row">${combo("Font", "Calibri", "f-name")}${combo("Font size", "11", "f-size")}
            <button class="tool grow" aria-label="Grow font">${icons.grow}</button>${tool("shrink", "Shrink font")}</div>
          <div class="row">
            <button class="tool serif bold">B</button><button class="tool serif italic">I</button><button class="tool serif under">U</button>${drop("Underline")}
            <span class="rule"></span>${tool("borders", "Borders")}${drop("Borders list")}
            <span class="rule"></span>${tool("fill", "Fill colour")}${drop("Fill list")}${tool("fontcolor", "Font colour")}${drop("Colour list")}
          </div>
        </div></div>${this.foot("Font")}
      </section>
      <section class="group align">
        <div class="body">
          <div class="rows">
            <div class="row">${tool("top", "Top")}${tool("middle", "Middle")}${tool("bottom", "Bottom", true)}<span class="rule"></span>${tool("orient", "Orientation")}${drop("Orientation list")}</div>
            <div class="row">${tool("left", "Left")}${tool("center", "Center")}${tool("right", "Right")}<span class="rule"></span>${tool("outdent", "Decrease indent")}${tool("indent", "Increase indent")}</div>
          </div>
          <span class="vrule"></span>
          <div class="rows labels">${this.item("wrap", "Wrap Text")}${this.item("merge", "Merge & Center", true)}</div>
        </div>${this.foot("Alignment")}
      </section>
      <section class="group number">
        <div class="body"><div class="rows">
          <div class="row">${combo("Number format", "General", "f-fmt")}</div>
          <div class="row">${tool("currency", "Accounting")}${drop("Accounting list")}${tool("percent", "Percent")}${tool("comma", "Comma")}
            <span class="rule"></span>${tool("incdec", "Increase decimal")}${tool("decdec", "Decrease decimal")}</div>
        </div></div>${this.foot("Number")}
      </section>
      <section class="group styles">
        <div class="body">
          ${this.big("conditional", "Conditional", "Formatting")}${this.big("tablefmt", "Format as", "Table")}
          <div class="gallery">
            <div class="swatches">
              <button class="normal">Normal</button><button class="bad">Bad</button><button class="good">Good</button>
              <button class="neutral">Neutral</button><button class="calc">Calculation</button><button class="check">Check Cell</button>
            </div>
            <div class="scroll">
              <button aria-label="Up"><span class="flip">${icons.arrow}</span></button><button aria-label="Down">${icons.arrow}</button><button aria-label="More">${icons.qat}</button>
            </div>
          </div>
        </div>${this.foot("Styles", false)}
      </section>
      <section class="group cells">
        <div class="body">${this.big("insert", "Insert")}${this.big("delete", "Delete")}${this.big("format", "Format")}</div>${this.foot("Cells", false)}
      </section>
      <section class="group edit">
        <div class="body">
          <div class="list">${this.item("sigma", "AutoSum", true)}${this.item("filldown", "Fill", true)}${this.item("clear", "Clear", true)}</div>
          ${this.big("sort", "Sort &", "Filter")}${this.big("find", "Find &", "Select")}
        </div>${this.foot("Editing", false)}
      </section>`;
  }
}

/* ---------- grid ---------- */

@customElement("sheet-grid")
class SheetGrid extends LitElement {
  static styles = css`
    :host { display: block; overflow: hidden; background: #f0f0f0; font-family: "Noto Sans", sans-serif; font-size: 15px; color: #111; }
    table { border-collapse: separate; border-spacing: 0; table-layout: fixed; width: 100%; }
    .c-head { width: 34px; }
    .c-data { width: 80px; }
    .c-wide { width: 274px; }
    th, td { box-sizing: border-box; height: 24px; }
    th { font-weight: 400; background: #dfe2e7; color: #3a3d42; border-right: 1px solid #9ea2a8; border-bottom: 1px solid #9ea2a8; padding: 0; text-align: center; line-height: 23px; }
    thead th:last-child { border-right: 0; }
    .corner { background: linear-gradient(135deg, #dfe2e7 62%, #b6b9be 62%); background-size: 30px 22px; background-repeat: no-repeat; }
    td { line-height: 22px; padding: 1px 2px 0 3px; background: #fff; border-right: 1px solid #000; border-bottom: 1px solid #000; overflow: hidden; white-space: nowrap; }
    .num { text-align: right; padding: 1px 3px 0 0; }
    .off { background: #f0f0f0; border-right: 0; border-bottom-color: #8a8a8a; }
    .flag { background: linear-gradient(135deg, #0b7a14 0, #0b7a14 4px, #fff 4px); }
    .hot { background: linear-gradient(#fbd25f, #ffe870); border-color: #c0953a; }
    .active { box-shadow: inset 1px 0 #000, inset 0 -1px #fff, inset 0 -2px #000; }
  `;

  render() {
    return html`<table>
      <colgroup><col class="c-head" />${columns.map((c) => html`<col class=${c === "T" ? "c-wide" : "c-data"} />`)}<col /></colgroup>
      <thead><tr><th class="corner"></th>${columns.map((c) => html`<th class=${c === "M" ? "hot" : ""}>${c}</th>`)}<th></th></tr></thead>
      <tbody>${rows.map(([head, ...cells]) => html`<tr>
        <th class=${head === "455" ? "hot" : ""}>${head}</th>
        ${cells.map((v, i) => {
          const flag = i === 0 && Number(head) < 463;
          return html`<td class=${classMap({ num: !flag && isNumeric(v), flag, active: head === "455" && i === 12 })}>${v}</td>`;
        })}<td class="off"></td></tr>`)}</tbody>
    </table>`;
  }
}

/* ---------- floating toolbar and menu ---------- */

@customElement("mini-toolbar")
class MiniToolbar extends LitElement {
  static styles = [baseStyles, css`
    :host { display: flex; flex-direction: column; gap: 3px; height: 61px; padding: 1px; background: #fff; border: 1px solid #a9adb4; border-radius: 3px; box-shadow: 3px 3px 4px rgba(90, 95, 120, .25); color: #333; }
    .row { display: flex; align-items: center; height: 27px; }
    .tool { width: 26px; }
    .f-name { width: 69px; }
    .f-size { width: 45px; margin-left: -1px; }
  `];

  render() {
    return html`
      <div class="row">${combo("Font", "Calibri", "f-name")}${combo("Font size", "11", "f-size")}
        ${tool("grow", "Grow font")}${tool("shrink", "Shrink font")}${tool("currency", "Accounting")}${drop("Accounting list")}
        ${tool("percent", "Percent")}${tool("comma", "Comma")}${tool("merge", "Merge")}</div>
      <div class="row"><button class="tool serif bold">B</button><button class="tool serif italic">I</button>${tool("center", "Center")}
        ${tool("fill", "Fill colour")}${drop("Fill list")}${tool("fontcolor", "Font colour")}${drop("Colour list")}
        ${tool("dotborders", "Borders")}${drop("Borders list")}${tool("incdec", "Increase decimal")}${tool("decdec", "Decrease decimal")}${tool("painter", "Format Painter")}</div>`;
  }
}

@customElement("context-menu")
class ContextMenu extends LitElement {
  static styles = [baseStyles, css`
    :host { display: block; width: 251px; background: linear-gradient(90deg, #fff 30px, #dfe1e8 30px, #dfe1e8 31px, #fff 31px); border: 1px solid #a9adb4; border-radius: 3px; box-shadow: 3px 3px 4px rgba(90, 95, 120, .25); color: #3b3b3b; padding-bottom: 2px; }
    .item { width: 100%; height: 27px; justify-content: flex-start; }
    .gutter { width: 39px; padding-left: 7px; flex: none; }
    .label { flex: 1; text-align: left; padding-top: 4px; line-height: 23px; }
    .more { padding-right: 12px; display: flex; align-items: center; gap: 12px; }
    .split { width: 1px; height: 19px; background: #7c8796; }
    .sep { height: 5px; padding: 2px 1px 0 39px; }
    .sep div { border-top: 1px dashed #bfc2c6; }
    .head { margin: 1px 1px 0 32px; height: 22px; padding: 3px 0 0 7px; line-height: 19px; background: #f0f1f4; font-weight: 700; }
    .headrow { position: relative; }
    .headrow svg { position: absolute; left: 7px; top: 6px; }
    .options { display: flex; height: 35px; padding-left: 32px; }
    .opt { position: relative; width: 36px; height: 35px; }
    .opt.on { background: linear-gradient(#fdebae, #fbd75c 40%, #ffeeb4); }
    .over { position: absolute; left: 6px; }
  `];

  private item(m: MenuItem) {
    if (m.sep) return html`<div class="sep"><div></div></div>`;
    return html`<button class="item"><span class="gutter">${m.icon ? icons[m.icon] : nothing}</span>
      <span class="label">${m.text}<u>${m.key}</u>${m.rest}</span>
      ${m.more ? html`<span class="more">${m.split ? html`<span class="split"></span>` : nothing}<svg width="5" height="8" viewBox="0 0 5 8"><path d="M0 0v8l4-4z" fill="#3a4f94"/></svg></span>` : nothing}</button>`;
  }

  render() {
    return html`
      ${this.item({ text: "Cu", key: "t", rest: "", icon: "cut" })}
      ${this.item({ text: "", key: "C", rest: "opy", icon: "copy" })}
      <div class="headrow">${icons.pasteSmall}<div class="head">Paste Options:</div></div>
      <div class="options">${pasteOptions.map((o) => html`<button class=${classMap({ opt: true, on: !!o.on })} aria-label=${o.name}>${clipTile(o.art)}</button>`)}</div>
      ${menuAfterPaste.map((m) => this.item(m))}`;
  }
}

/* ---------- page ---------- */

@customElement("app-root")
class AppRoot extends LitElement {
  static styles = [baseStyles, css`
    :host { display: flex; flex-direction: column; position: relative; height: 100vh; overflow: hidden; background: #fff; font-family: "Noto Sans", "Open Sans", sans-serif; font-size: 12px; color: #3d3d3d; }
    .title { display: flex; align-items: center; height: 31px; flex: none; color: #111; }
    .quick { width: 150px; display: flex; align-items: center; padding: 0 0 4px 1px; }
    .quick .bar { width: 1px; height: 18px; background: #8b8b8b; margin: 0 9px 0 3px; }
    .quick .bar.end { margin: 0 6px; }
    .q { height: 20px; margin-right: 8px; }
    .q.save { margin-right: 11px; }
    .q-arrow { margin-right: 9px; }
    .q-arrow.last { margin-right: 0; }
    .title h1 { flex: 1; margin: 0; font: inherit; font-size: 14px; text-align: center; }
    .window { width: 102px; display: flex; justify-content: flex-end; gap: 46px; padding: 4px 35px 0 0; }
    .tabs { display: flex; height: 30px; flex: none; align-items: stretch; position: relative; }
    .tabs a { color: inherit; text-decoration: none; padding: 0 15px 0 14px; display: flex; align-items: center; }
    .tabs .file { width: 70px; padding: 0; justify-content: center; margin-right: 4px; background: radial-gradient(ellipse at 50% 110%, #6cc04a 0, #2f8f2f 60%, #237d27 100%); color: #fff; border: 1px solid #1d6a22; border-radius: 3px 3px 0 0; }
    .tabs .home { width: 61px; padding: 0; justify-content: center; border: 1px solid #b5b9c0; border-bottom: 0; border-radius: 3px 3px 0 0; background: #fff; z-index: 1; }
    .spring { flex: 1; }
    .aid { display: flex; align-items: center; gap: 13px; padding-right: 9px; }
    .formula { display: grid; grid-template-columns: 283px 1fr; height: 53px; flex: none; padding-top: 3px; background: linear-gradient(#c5cad2, #e4e7eb 4px); border-bottom: 1px solid #9a9ea5; font-size: 15px; color: #111; }
    .left { background: #dfe2e7; border-right: 1px solid #9a9ea5; border-top: 1px solid #9a9ea5; }
    .namerow { display: flex; height: 25px; border-bottom: 1px solid #9a9ea5; }
    .name { width: 160px; background: #fff; text-align: center; }
    .namedrop { width: 22px; background: #fff; }
    .pill { flex: 1; display: flex; align-items: center; justify-content: space-between; padding: 0 5px 0 6px; background: #dfe2e7; border-left: 1px solid #9a9ea5; border-radius: 12px 0 0 12px; }
    .namewrap { display: flex; flex: 1; background: #fff; }
    .knob { width: 9px; height: 9px; border-radius: 50%; background: linear-gradient(#b9bdc3, #f3f4f6); }
    .value { border: 0 solid #9a9ea5; border-top-width: 1px; border-radius: 0; background: #fff; padding: 1px 0 0 10px; display: block; width: 100%; height: 100%; resize: none; overflow: hidden; font: inherit; line-height: 23px; color: inherit; outline: none; }
    .gap { height: 4px; flex: none; background: #e3e4ef; border-bottom: 1px solid #8a8f97; border-top: 1px solid #fff; }
    sheet-grid { flex: 1; min-height: 0; }
    .bottom { height: 17px; flex: none; display: flex; border-top: 1px solid #9ea2a8; background: #dde1e7; font-size: 13px; color: #55585d; overflow: hidden; }
    .nav { width: 79px; display: flex; gap: 9px; padding-left: 5px; height: 16px; align-items: center; }
    .sheet { height: 16px; color: inherit; text-decoration: none; line-height: 18px; display: flex; justify-content: center; background: #e6eaee; flex: none; padding-right: 10px; }
    .slash { width: 14px; height: 16px; flex: none; }
    .sheet.s1 { width: 86px; background: #fff; font-size: 14px; font-weight: 700; color: #333; padding: 0; }
    .s2 { width: 122px; }
    .s3 { width: 141px; }
    .s4 { width: 133px; }
    .s5 { width: 158px; }
    .s6 { width: 18px; background: #e6eaee; }
    .split { width: 9px; border: 1px solid #7b8088; background: #fff; }
    .sarrow { width: 22px; }
    .thumb { width: 506px; border: 1px solid #9ea2a8; border-width: 0 1px; background: linear-gradient(#f2f4f6, #e4e8ec); display: flex; justify-content: center; align-items: center; }
    .track { width: 196px; background: linear-gradient(#ccd0d6, #e3e6ea); }
    .mini { position: absolute; left: 1019px; top: 469px; width: 286px; }
    .menu { position: absolute; left: 1019px; top: 548px; }
    .mark { position: absolute; border: 5px solid #ed1c24; pointer-events: none; }
    .m1 { left: 988px; top: 533px; width: 91px; height: 32px; }
    .m2 { left: 1080px; top: 623px; width: 51px; height: 42px; }
    .m3 { left: 79px; top: 971px; width: 85px; height: 34px; }
  `];

  private slash(from: string, to: string) {
    return html`<svg class="slash" width="14" height="16" viewBox="0 0 14 16"><path d="M0 0h14L1 16H0z" fill=${from}/><path d="M14 0v16H1z" fill=${to}/><path d="M14 0L1 16" stroke="#9ea2a8" fill="none"/></svg>`;
  }

  render() {
    const navArrows = ["M1.500 1v8M8 1L3 5l5 4z", "M7 1L2 5l5 4z", "M2 1l5 4-5 4z", "M8.500 1v8M2 1l5 4-5 4z"];
    const labels = ["First sheet", "Previous sheet", "Next sheet", "Last sheet"];
    return html`
      <header class="title">
        <div class="quick">${icons.excel}<span class="bar"></span>
          <button class="q save" aria-label="Save">${icons.save}</button>
          <button class="q" aria-label="Undo">${icons.undo}</button><button class="q-arrow" aria-label="Undo list">${icons.darrow}</button>
          <button class="q" aria-label="Redo">${icons.redo}</button><button class="q-arrow last" aria-label="Redo list">${icons.garrow}</button>
          <span class="bar end"></span><button aria-label="Customise toolbar">${icons.qat}</button>
        </div>
        <h1>2021-10-14 Data snapshot template blank test.xlsx - Microsoft Excel</h1>
        <div class="window">
          <button aria-label="Minimise"><svg width="12" height="12" viewBox="0 0 12 12"><path d="M0 5.500h12" stroke="#111"/></svg></button>
          <button aria-label="Restore"><svg width="12" height="12" viewBox="0 0 12 12"><path d="M.5 2.500h9v9h-9zM2.500 2V.5h9v9H10" fill="none" stroke="#111"/></svg></button>
        </div>
      </header>
      <nav class="tabs">
        <a class="file" href="#file">File</a><a class="home" href="#home">Home</a>
        ${["Insert", "Page Layout", "Formulas", "Data", "Review", "View"].map((t) => html`<a href="#${t}">${t}</a>`)}
        <span class="spring"></span>
        <div class="aid">
          <button aria-label="Collapse ribbon"><svg width="10" height="8" viewBox="0 0 10 8"><path d="M1 5l4-4 4 4v2H7L5 5 3 7H1z" fill="none" stroke="#4a4f57"/></svg></button>
          <button aria-label="Help">${icons.help}</button>
          <button aria-label="Minimise workbook"><svg width="11" height="6" viewBox="0 0 11 6"><rect x=".5" y=".5" width="10" height="4" rx="1" fill="none" stroke="#4a4f57"/></svg></button>
        </div>
      </nav>
      <ribbon-bar></ribbon-bar>
      <div class="formula">
        <div class="left"><div class="namerow">
          <input class="name" aria-label="Name box" .value=${"M455"} /><button class="namedrop" aria-label="Names"><svg width="10" height="5" viewBox="0 0 10 5"><path d="M0 0h10L5 5z" fill="#333"/></svg></button>
          <div class="namewrap"><div class="pill"><span class="knob"></span><button aria-label="Insert function">${icons.fx}</button></div></div>
        </div></div>
        <textarea class="value" aria-label="Formula" .value=${"0"}></textarea>
      </div>
      <div class="gap"></div>
      <sheet-grid></sheet-grid>
      <footer class="bottom">
        <div class="nav">${navArrows.map((d, i) => html`<button aria-label=${labels[i]}><svg width="10" height="10" viewBox="0 0 10 10"><path d=${d} fill="#4a4f57" stroke="#4a4f57" stroke-width=".8"/></svg></button>`)}</div>
        <a class="sheet s1" href="#snapshot">Snapshot</a>${this.slash("#fff", "#e6eaee")}
        <a class="sheet s2" href="#par">PublicAllResults</a>${this.slash("#e6eaee", "#e6eaee")}
        <a class="sheet s3" href="#pss">PublicSinceShared</a>${this.slash("#e6eaee", "#e6eaee")}
        <a class="sheet s4" href="#pvr">PrivateAllResults</a>${this.slash("#e6eaee", "#e6eaee")}
        <a class="sheet s5" href="#psc">PrivateSinceCreated</a>${this.slash("#e6eaee", "#e6eaee")}
        <button class="s6" aria-label="Insert sheet">${icons.newsheet}</button>${this.slash("#e6eaee", "#dde1e7")}
        <span class="spring"></span>
        <span class="split"></span>
        <button class="sarrow" aria-label="Scroll left"><svg width="7" height="10" viewBox="0 0 7 10"><path d="M6 0v10L0 5z" fill="#333"/></svg></button>
        <div class="thumb"><svg width="8" height="8" viewBox="0 0 8 8"><path d="M.5 0v8M2.500 0v8M4.500 0v8M6.500 0v8" stroke="#8a8f97"/></svg></div>
        <div class="track"></div>
      </footer>
      <mini-toolbar class="mini"></mini-toolbar>
      <context-menu class="menu"></context-menu>
      <div class="mark m1"></div><div class="mark m2"></div><div class="mark m3"></div>`;
  }
}
